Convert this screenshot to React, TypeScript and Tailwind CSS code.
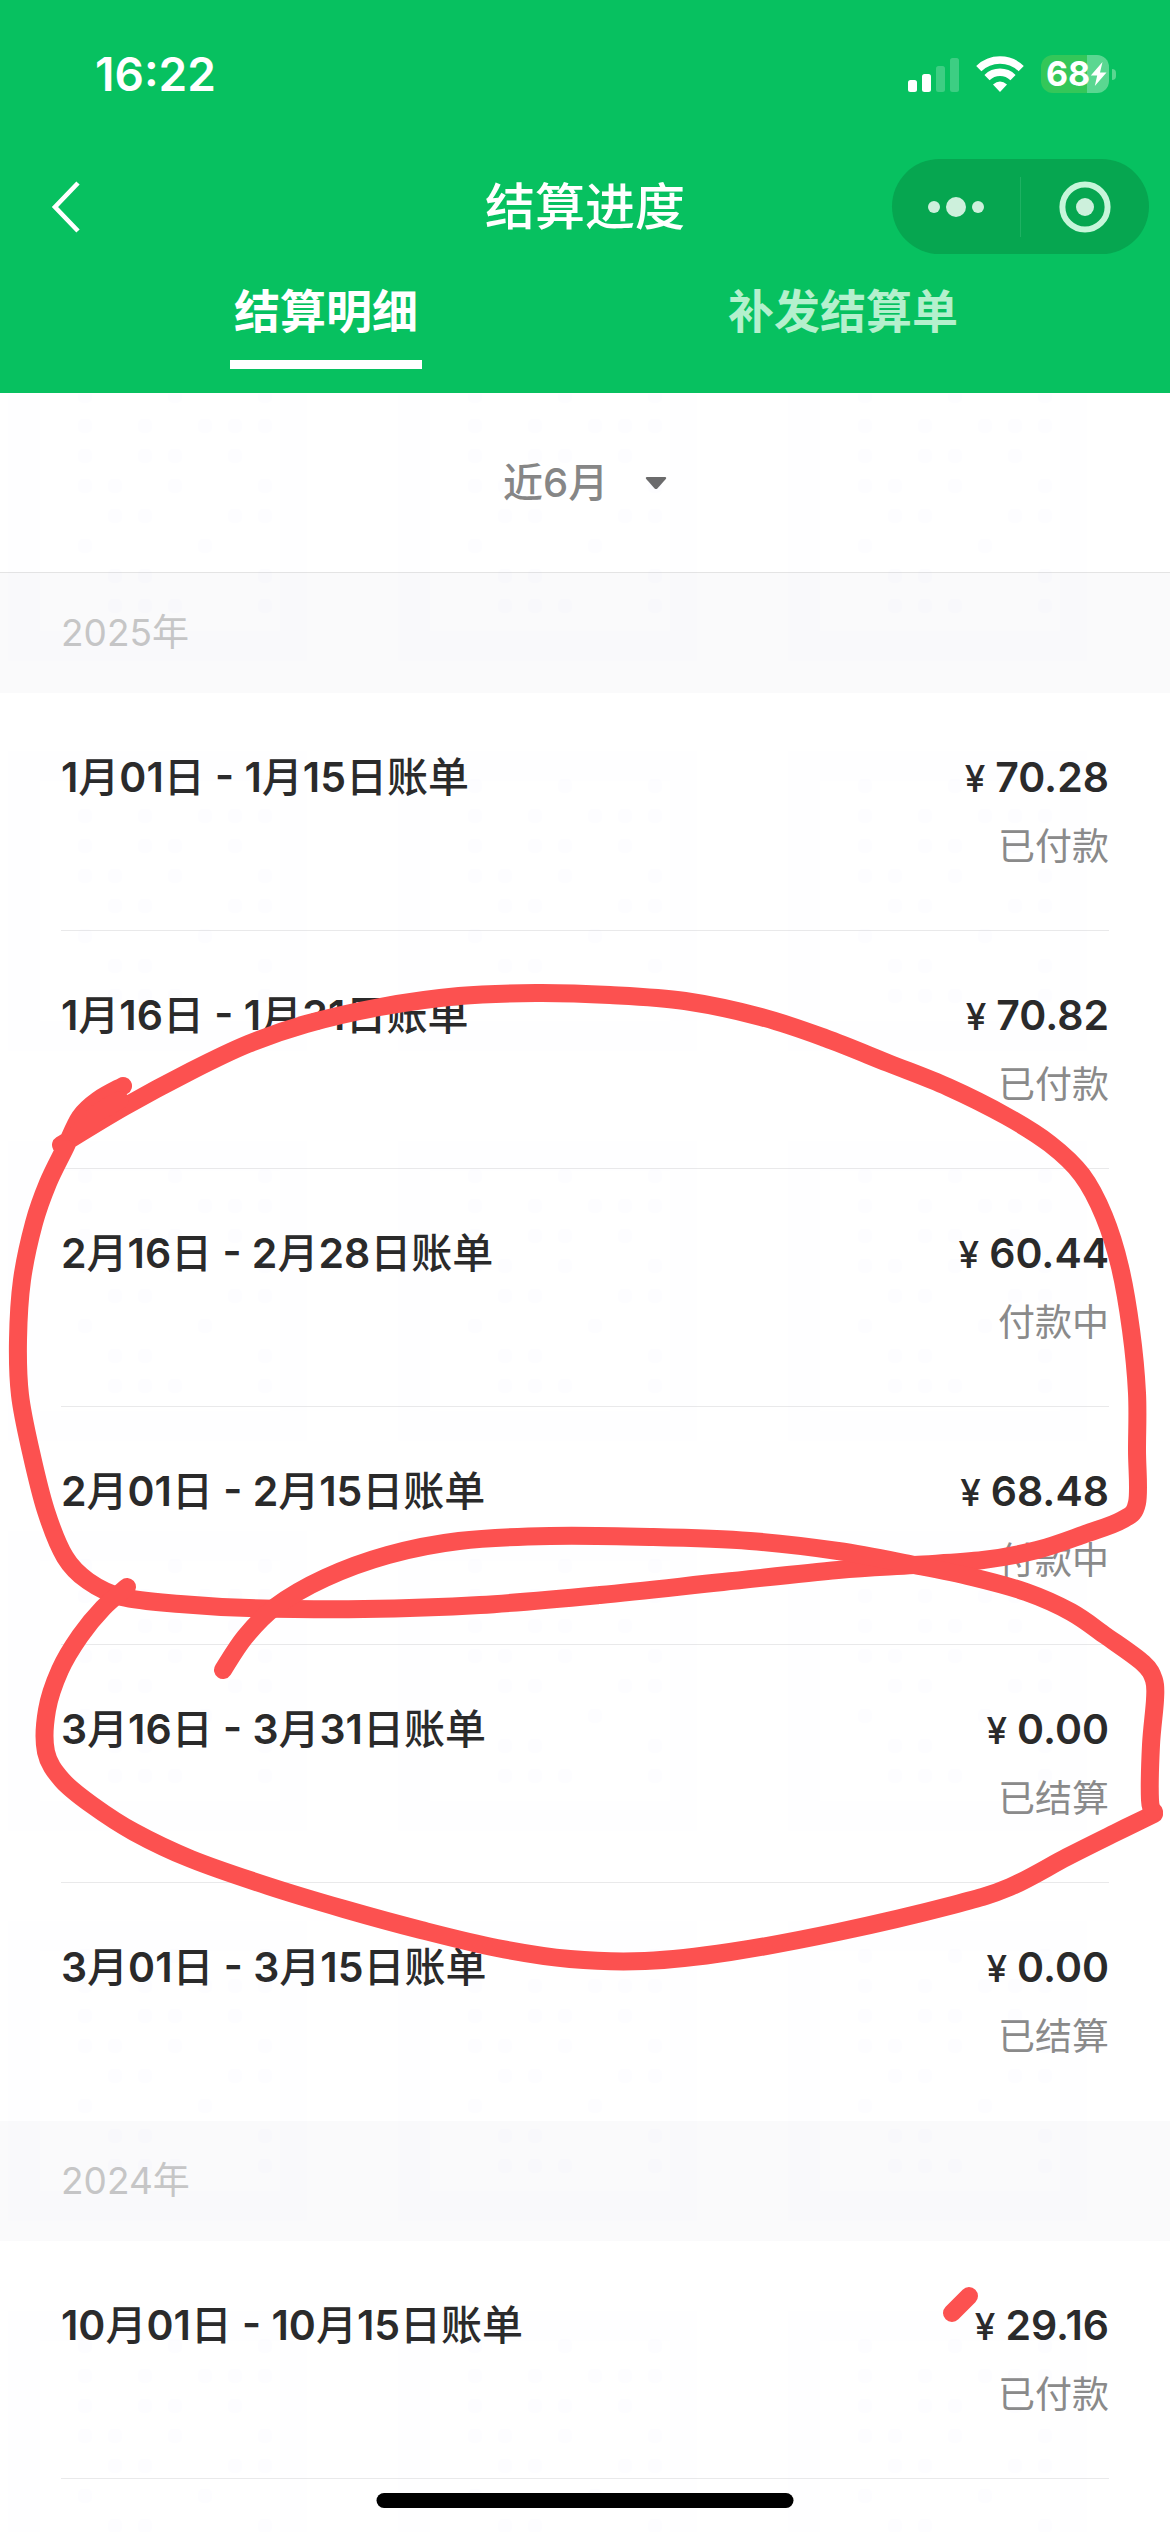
import { useState } from "react"

type Bill = { period: string; amount: string; status: string }

const groups: { year: string; bills: Bill[] }[] = [
  {
    year: "2025年",
    bills: [
      { period: "1月01日 - 1月15日账单", amount: "70.28", status: "已付款" },
      { period: "1月16日 - 1月31日账单", amount: "70.82", status: "已付款" },
      { period: "2月16日 - 2月28日账单", amount: "60.44", status: "付款中" },
      { period: "2月01日 - 2月15日账单", amount: "68.48", status: "付款中" },
      { period: "3月16日 - 3月31日账单", amount: "0.00", status: "已结算" },
      { period: "3月01日 - 3月15日账单", amount: "0.00", status: "已结算" },
    ],
  },
  {
    year: "2024年",
    bills: [{ period: "10月01日 - 10月15日账单", amount: "29.16", status: "已付款" }],
  },
]

const tabs = ["结算明细", "补发结算单"]

// hand drawn marks, as points the pen went through
const strokes: [number, number][][] = [
  [
    [61, 1145], [124, 1107], [191, 1071], [248, 1044], [306, 1024], [380, 1007], [459, 996], [536, 993],
    [610, 995], [685, 1001], [761, 1017], [825, 1038], [888, 1063], [948, 1087], [1006, 1116], [1050, 1144],
    [1082, 1175], [1104, 1216], [1120, 1267], [1131, 1330], [1137, 1393], [1137, 1450], [1137, 1503],
    [1122, 1520], [1085, 1534], [1037, 1550], [983, 1560], [914, 1565], [838, 1570], [723, 1582],
    [600, 1595], [480, 1605], [364, 1609], [249, 1608], [180, 1604], [122, 1597], [88, 1581], [65, 1557],
    [46, 1511], [31, 1452], [20, 1395], [18, 1340], [22, 1280], [34, 1223], [48, 1183], [65, 1148],
    [80, 1117], [98, 1100], [123, 1086],
  ],
  [[76, 1134], [96, 1114], [120, 1100]],
  [
    [127, 1587], [103, 1608], [80, 1636], [60, 1670], [47, 1710], [46, 1752], [62, 1780], [92, 1805],
    [134, 1832], [191, 1859], [268, 1886], [344, 1909], [421, 1930], [497, 1948], [570, 1959], [645, 1961],
    [730, 1952], [838, 1932], [953, 1905], [1010, 1887], [1067, 1857], [1115, 1833], [1154, 1814],
  ],
  [
    [1154, 1812], [1150, 1800], [1151, 1745], [1155, 1700], [1154, 1680], [1143, 1663], [1106, 1636],
    [1071, 1612], [1026, 1592], [972, 1577], [914, 1565], [838, 1551], [750, 1541], [650, 1537],
    [550, 1536], [459, 1541], [388, 1555], [325, 1578], [275, 1607], [245, 1637], [223, 1670],
  ],
  [[969, 2296], [952, 2313]],
]

function smooth(pts: [number, number][]) {
  let d = `M${pts[0][0]} ${pts[0][1]}`
  for (let i = 0; i < pts.length - 1; i++) {
    const p0 = pts[i - 1] ?? pts[i]
    const p1 = pts[i]
    const p2 = pts[i + 1]
    const p3 = pts[i + 2] ?? p2
    d += `C${p1[0] + (p2[0] - p0[0]) / 6} ${p1[1] + (p2[1] - p0[1]) / 6} ${p2[0] - (p3[0] - p1[0]) / 6} ${p2[1] - (p3[1] - p1[1]) / 6} ${p2[0]} ${p2[1]}`
  }
  return d
}

// which cells of the 7 x 8 watermark grid carry a dot
const watermark = [
  [0, 3, 6],
  [0, 2, 4, 5, 6],
  [0, 2, 3, 5],
  [0, 1, 3, 6],
  [1, 2, 5, 6],
  [0, 4],
  [1, 2, 6],
  [1, 2, 3, 6],
]

function StatusBar() {
  return (
    <div className="flex items-center justify-between pt-[46px] pr-[54px] pl-[95px]">
      <time className="text-[46px] leading-[56px] font-semibold text-white">16:22</time>
      <div className="flex items-center gap-[17px]">
        <svg className="h-[36px] w-[51px]" viewBox="0 0 51 36" fill="#fff">
          <rect x="0" y="24" width="9" height="12" rx="2.5" />
          <rect x="14" y="18" width="9" height="18" rx="2.5" />
          <rect x="28" y="10" width="9" height="26" rx="2.5" opacity="0.22" />
          <rect x="42" y="2" width="9" height="34" rx="2.5" opacity="0.22" />
        </svg>
        <svg className="h-[36px] w-[48px]" viewBox="0 0 48 36" fill="none" stroke="#fff" strokeWidth="7.4">
          <path d="M2.8 12.6A30.4 30.4 0 0 1 45.2 12.6" />
          <path d="M11 21.6A18.6 18.6 0 0 1 37 21.6" />
          <path d="M24 36L17 28.4Q24 22.4 31 28.4Z" fill="#fff" stroke="none" />
        </svg>
        <div className="flex items-center gap-[3px]">
          <div className="flex h-[38px] w-[68px] items-center rounded-xl bg-linear-to-r from-[#34c759] from-68% to-[#5ad791] to-68% pl-[5px]">
            <span className="text-[34px] leading-[38px] font-bold text-white">68</span>
            <svg className="h-[26px] w-[17px]" viewBox="0 0 17 24" fill="#fff">
              <path d="M12.5 0L0.8 13.4H7.2L4.8 24L16.5 10.4H10Z" />
            </svg>
          </div>
          <div className="h-[11px] w-[4px] rounded-r-full bg-[#5ad791]" />
        </div>
      </div>
    </div>
  )
}

function NavBar() {
  return (
    <div className="mt-[57px] grid h-[95px] grid-cols-[1fr_auto_1fr] items-center px-[21px]">
      <button aria-label="返回" className="justify-self-start pl-[30px]">
        <svg className="h-[52px] w-[30px]" viewBox="0 0 30 52" fill="none" stroke="#fff" strokeWidth="4.6">
          <path d="M27 2L4 26L27 50" />
        </svg>
      </button>
      <h1 className="text-[50px] leading-[60px] font-medium text-white">结算进度</h1>
      <div className="flex h-[95px] w-[257px] items-center justify-self-end rounded-full bg-[#06a650]">
        <button aria-label="更多" className="flex h-full flex-1 items-center justify-center">
          <svg className="h-[20px] w-[56px]" viewBox="0 0 56 20" fill="#cdf0dc">
            <circle cx="6" cy="10" r="6" />
            <circle cx="28" cy="10" r="10" />
            <circle cx="50" cy="10" r="6" />
          </svg>
        </button>
        <div className="h-[60px] w-px bg-[#1fb163]" />
        <button aria-label="关闭" className="flex h-full flex-1 items-center justify-center">
          <svg className="h-[52px] w-[52px]" viewBox="0 0 52 52" fill="none">
            <circle cx="26" cy="26" r="22.6" stroke="#c6f6da" strokeWidth="6" />
            <circle cx="26" cy="26" r="9" fill="#cdf0dc" />
          </svg>
        </button>
      </div>
    </div>
  )
}

function BillRow({ bill }: { bill: Bill }) {
  return (
    <li className="flex h-[238px] justify-between border-b border-[#e9e9ea] pt-[58px] last:border-transparent">
      <span className="text-[41px] leading-[52px] font-semibold text-[#2a2a2a]">
        {/* hanzi one step lighter than the digits */}
        {bill.period.split(/([月日账单]+)/).map((part, i) =>
          i % 2 ? (
            <span key={i} className="font-medium">
              {part}
            </span>
          ) : (
            part
          ),
        )}
      </span>
      <div className="flex flex-col items-end gap-4">
        <span className="flex items-baseline gap-2.5 text-[41px] leading-[52px] font-semibold text-[#2a2a2a]">
          <span className="text-[37px] font-medium">¥</span>
          {bill.amount}
        </span>
        <span className="text-[37px] leading-[52px] text-[#8a8a8a]">{bill.status}</span>
      </div>
    </li>
  )
}

export default function App() {
  const [active, setActive] = useState(0)

  return (
    <div className="relative min-h-screen overflow-hidden bg-white font-['Inter','Noto_Sans_CJK_SC',sans-serif]">
      <header className="bg-[#07c160]">
        <StatusBar />
        <NavBar />
        <div role="tablist" className="flex h-[139px] items-start justify-between pt-[27px] pr-[208px] pl-[230px]">
          {tabs.map((tab, i) => (
            <button
              key={tab}
              role="tab"
              aria-selected={active === i}
              onClick={() => setActive(i)}
              className={`border-b-9 px-1 pb-[19px] text-[46px] leading-[60px] font-bold ${
                active === i ? "border-white text-white" : "border-transparent text-[#b4f0cd]"
              }`}
            >
              {tab}
            </button>
          ))}
        </div>
      </header>

      <main>
        <div className="flex h-[180px] items-center justify-center border-b border-[#e4e4e4]">
          <label className="flex items-center gap-[36px]">
            <select
              aria-label="时间范围"
              className="appearance-none bg-transparent text-[40px] leading-[52px] font-medium text-[#868686]"
            >
              <option>近6月</option>
            </select>
            <svg className="h-[14px] w-[22px]" viewBox="0 0 22 14" fill="#6b6b6b">
              <path d="M2 1H20Q22 1.4 20.8 3L12.4 12.4Q11 13.6 9.6 12.4L1.2 3Q0 1.4 2 1Z" />
            </svg>
          </label>
        </div>
        {groups.map((group) => (
          <section key={group.year}>
            <h2 className="flex h-[120px] items-center bg-[#fafafb] px-[61px] text-[37px] leading-[52px] text-[#c6c6c6]">
              {group.year}
            </h2>
            <ul className="px-[61px]">
              {group.bills.map((bill) => (
                <BillRow key={bill.period} bill={bill} />
              ))}
              {group.year === "2024年" && <li />}
            </ul>
          </section>
        ))}
      </main>

      <svg className="pointer-events-none absolute inset-x-0 top-[394px] h-[2138px] w-full">
        <defs>
          <pattern id="watermark" width="390" height="390" y="-33" patternUnits="userSpaceOnUse">
            <path d="M8 0H307V300H8ZM40 30V270H280V30Z" fill="#6060ff" fillOpacity="0.008" fillRule="evenodd" />
            {watermark.map((cols, row) =>
              cols.map((col) => (
                <rect
                  key={`${row}-${col}`}
                  x={78 + col * 30}
                  y={28 + row * 30}
                  width="14"
                  height="14"
                  rx="5"
                  fill="#6060ff"
                  fillOpacity="0.016"
                />
              )),
            )}
          </pattern>
        </defs>
        <rect width="100%" height="100%" fill="url(#watermark)" />
      </svg>

      <svg
        className="pointer-events-none absolute inset-x-0 top-0 w-full"
        viewBox="0 0 1170 2532"
        fill="none"
        stroke="#fc5150"
        strokeWidth="18"
        strokeLinecap="round"
        strokeLinejoin="round"
      >
        {strokes.map((pts, i) => (
          <path key={i} d={smooth(pts)} />
        ))}
      </svg>

      <div className="absolute bottom-[24px] left-1/2 h-[15px] w-[417px] -translate-x-1/2 rounded-full bg-black" />
    </div>
  )
}
